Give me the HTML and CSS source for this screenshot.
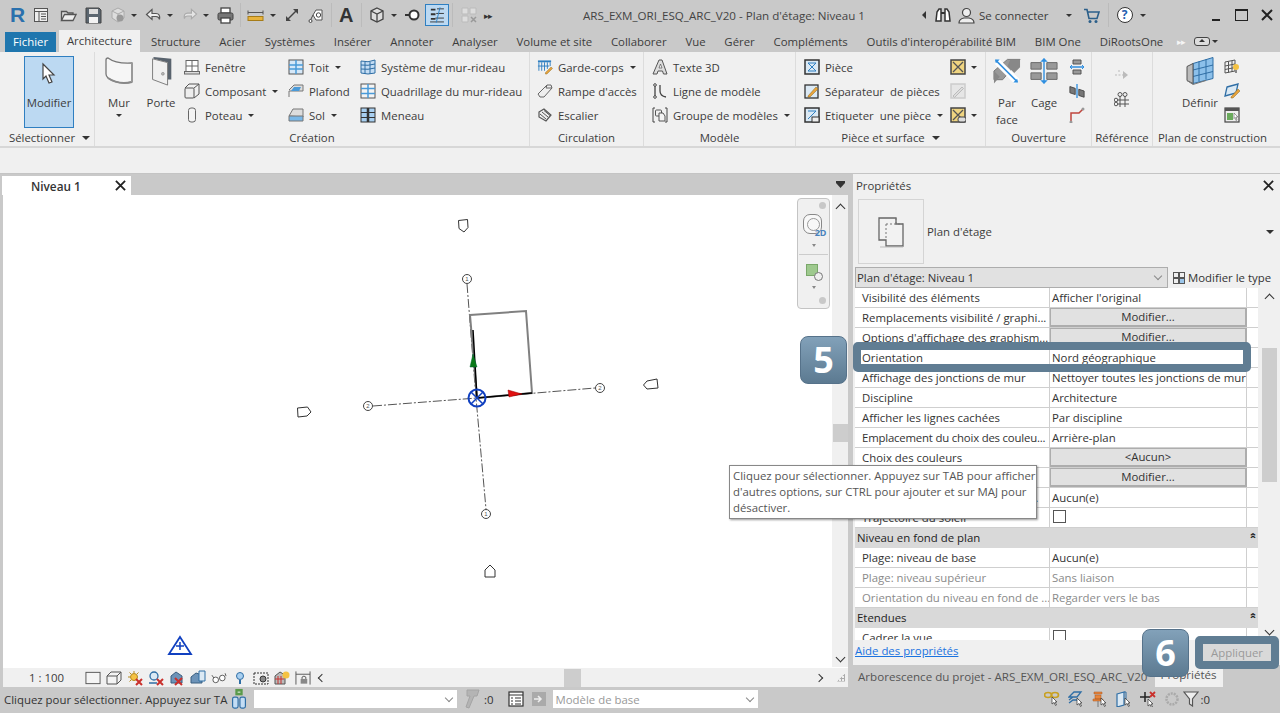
FILE: index.html
```html
<!DOCTYPE html>
<html lang="fr">
<head>
  <meta charset="UTF-8">
  <title>ARS_EXM_ORI_ESQ_ARC_V20 - Plan d'étage: Niveau 1</title>
  <link rel="stylesheet" href="styles.css">
</head>
<body>

<!-- jeu d'icones -->
<svg class="sprite" xmlns="http://www.w3.org/2000/svg">
  <symbol id="i-browser" viewBox="0 0 16 16"><rect x="1.5" y="1.5" width="13" height="13" fill="#eee" stroke="#555"/><path d="M1.5 4.5h13M6 4.5v10M8 7h5M8 9.500h5M8 12h5" stroke="#555" fill="none"/></symbol>
  <symbol id="i-open" viewBox="0 0 17 16"><path d="M1.500 13V4h5l1.500 1.500h5V7" fill="#ddd" stroke="#555" stroke-width="1.300"/><path d="M1.500 13l3-6h11.500l-3 6z" fill="#eee" stroke="#555" stroke-width="1.300"/></symbol>
  <symbol id="i-save" viewBox="0 0 17 17"><path d="M1 1h13l2 2v13H1z" fill="#5b6670" stroke="#444"/><rect x="4" y="2" width="9" height="5" fill="#ddd"/><rect x="4" y="10" width="9" height="6" fill="#f2f2f2"/></symbol>
  <symbol id="i-cube-grey" viewBox="0 0 16 16"><path d="M8 1l6 3v7l-6 4-6-4V4z" fill="#ddd" stroke="#aaa"/><path d="M2 4l6 3 6-3M8 7v8" stroke="#aaa" fill="none"/><circle cx="10" cy="11" r="3.500" fill="#999"/></symbol>
  <symbol id="i-undo" viewBox="0 0 17 16"><path d="M7 2L1.500 7 7 12V9h4q3 0 3.500 3 1-6-3.500-6H7z" fill="#eee" stroke="#555" stroke-width="1.200"/></symbol>
  <symbol id="i-redo" viewBox="0 0 17 16"><path d="M10 2l5.500 5L10 12V9H6q-3 0-3.500 3-1-6 3.500-6h4z" fill="#e4e4e4" stroke="#aaa" stroke-width="1.200"/></symbol>
  <symbol id="i-print" viewBox="0 0 17 17"><rect x="4" y="1" width="9" height="5" fill="#fff" stroke="#444" stroke-width="1.300"/><rect x="1" y="6" width="15" height="7" rx="1.500" fill="#777" stroke="#444"/><rect x="4" y="11" width="9" height="5" fill="#fff" stroke="#444" stroke-width="1.300"/></symbol>
  <symbol id="i-measure" viewBox="0 0 17 16"><path d="M1 5h15M1 3v4M16 3v4" stroke="#555" fill="none"/><rect x="1" y="9" width="15" height="4" fill="#e8b33c" stroke="#a67c18"/></symbol>
  <symbol id="i-dim" viewBox="0 0 16 16"><path d="M3 13L13 3" stroke="#444" stroke-width="1.500"/><path d="M9 2h5v5zM2 9v5h5z" fill="#444"/></symbol>
  <symbol id="i-tag" viewBox="0 0 16 16"><path d="M2 14l3-6" stroke="#444"/><circle cx="2.500" cy="14" r="1.500" fill="#fff" stroke="#444"/><path d="M5 8l3-5h6v10H8z" fill="#fff" stroke="#555"/><circle cx="10.500" cy="8" r="2.200" fill="none" stroke="#444"/></symbol>
  <symbol id="i-house" viewBox="0 0 16 16"><path d="M8 1l6 3v8l-6 3-6-3V4z" fill="#ddd" stroke="#444" stroke-width="1.300"/><path d="M2 4l6 3 6-3M8 7v8" stroke="#444" fill="none" stroke-width="1.300"/></symbol>
  <symbol id="i-thin" viewBox="0 0 16 16"><circle cx="9" cy="8" r="4.500" fill="#fff" stroke="#333" stroke-width="2"/><path d="M0 8h5" stroke="#333" stroke-width="2"/></symbol>
  <symbol id="i-toggle" viewBox="0 0 24 26"><path d="M4 6h6M4 12h6M4 18h6" stroke="#333" stroke-width="2.500"/><path d="M12 5h9M11 11h10M10 17h11M3 22h18" stroke="#333" stroke-width="1.200"/><path d="M16 3l-5 20" stroke="#2f7fc1" stroke-width="1.200"/></symbol>
  <symbol id="i-squares" viewBox="0 0 16 16"><path d="M1 1h6v6H1zM9 1h6v6H9zM1 9h6v6H1z" fill="#ddd" stroke="#bbb"/><path d="M10 10l5 5M15 10l-5 5" stroke="#999" stroke-width="1.500"/></symbol>
  <symbol id="i-binoc" viewBox="0 0 16 16"><path d="M1 14l1-9 2-3h2v12zM15 14l-1-9-2-3h-2v12z" fill="#fff" stroke="#333" stroke-width="1.500"/><path d="M6 6h4" stroke="#333" stroke-width="2"/></symbol>
  <symbol id="i-user" viewBox="0 0 17 17"><circle cx="8.500" cy="5.500" r="4" fill="#eee" stroke="#444" stroke-width="1.200"/><path d="M1 16q0-4 5-5h5q5 1 5 5z" fill="#eee" stroke="#444" stroke-width="1.200"/></symbol>
  <symbol id="i-cart" viewBox="0 0 17 16"><path d="M1 2h3l2 9h8l2-6.500H5" fill="none" stroke="#2b5f8a" stroke-width="1.600"/><circle cx="7" cy="14" r="1.500" fill="#2b5f8a"/><circle cx="13" cy="14" r="1.500" fill="#2b5f8a"/></symbol>
  <symbol id="i-close" viewBox="0 0 12 12"><path d="M1 1l10 10M11 1L1 11" stroke="#222" stroke-width="2"/></symbol>

  <symbol id="i-cursor" viewBox="0 0 16 24"><path d="M2 2l11 11H8l3 7-3 1-3-7-3 3z" fill="#fff" stroke="#444" stroke-width="1.200"/></symbol>
  <symbol id="i-mur" viewBox="0 0 28 30"><path d="M3 2Q11 8 27 7V26Q13 29 3 22 1 20 1 18V4Q1 2 3 2z" fill="#f6f6f6" stroke="#777" stroke-width="1.300"/><path d="M3 22Q13 29 27 26" fill="none" stroke="#888" stroke-width="2"/><path d="M27 7V26" stroke="#999" stroke-width="2"/></symbol>
  <symbol id="i-porte" viewBox="0 0 24 32"><path d="M4 1l19 2v22h-4V7L4 3z" fill="#59636e"/><path d="M3 3l16 4v24L3 25z" fill="#f0f0f0" stroke="#777"/><circle cx="14" cy="19" r="1.500" fill="#bbb" stroke="#666" stroke-width=".5"/></symbol>
  <symbol id="i-fenetre" viewBox="0 0 16 16"><rect x="2" y="1.500" width="12" height="11" fill="#fff" stroke="#666"/><path d="M8 1.500v11M2 7h12" stroke="#666"/><rect x=".5" y="12.500" width="15" height="2.500" fill="#ddd" stroke="#666"/></symbol>
  <symbol id="i-composant" viewBox="0 0 16 16"><rect x="1" y="5" width="9" height="10" rx="1" fill="#eee" stroke="#555"/><path d="M1 5l4-4h10v10l-5 4M10 5l5-4" fill="none" stroke="#555"/></symbol>
  <symbol id="i-poteau" viewBox="0 0 16 16"><rect x="4.500" y="1" width="7" height="14" rx="2.500" fill="#f4f4f4" stroke="#666"/></symbol>
  <symbol id="i-toit" viewBox="0 0 16 16"><rect x="1" y="1" width="14" height="14" fill="#d6e8f8" stroke="#555"/><path d="M8 1v14M1 6h14M1 10h14" stroke="#4a9ad8" stroke-width="1.500"/></symbol>
  <symbol id="i-plafond" viewBox="0 0 16 16"><path d="M1 7l5-5h9v6H1v6" fill="#ddd" stroke="#777"/><path d="M3 8l3-4h7l-2 4z" fill="#4a9ad8"/></symbol>
  <symbol id="i-sol" viewBox="0 0 16 16"><path d="M1 9l4-7h10v8z" fill="#ddd" stroke="#777"/><path d="M1 9h14v5H1z" fill="#7ab8e8" stroke="#777"/></symbol>
  <symbol id="i-sysmur" viewBox="0 0 16 16"><path d="M1 2q7 2 14-1v13q-7 2-14 0z" fill="#c4ddf4" stroke="#2f6ea5"/><path d="M5 3v12M10 3v12M1 6q7 1 14-1M1 10q7 1 14-1" stroke="#2f6ea5" fill="none"/></symbol>
  <symbol id="i-quad" viewBox="0 0 16 16"><rect x="1" y="1" width="14" height="14" fill="#f4f4f4" stroke="#555"/><path d="M1 5.500h14M1 10.500h14M8 1v14" stroke="#4a9ad8" stroke-width="1.500"/></symbol>
  <symbol id="i-meneau" viewBox="0 0 16 16"><rect x="1" y="1" width="14" height="14" fill="#a8cff0" stroke="#333"/><path d="M8 1v14" stroke="#333" stroke-width="2.500"/><path d="M1 5.500h14M1 10.500h14" stroke="#333"/></symbol>
  <symbol id="i-garde" viewBox="0 0 17 16"><path d="M1 2h14" stroke="#2f7fc1" stroke-width="2"/><path d="M2 3v9M5 3v9M8 3v9M11 3v7M14 3v4M1 7h12" stroke="#2f7fc1"/><path d="M9 14l6-6 1.500 1.500-6 6H9z" fill="#e8a33c" stroke="#8a6a20" stroke-width=".5"/></symbol>
  <symbol id="i-rampe" viewBox="0 0 16 16"><path d="M1 11L10 2h4l1 3-8 9H3z" fill="#eee" stroke="#666"/><path d="M10 2l-1 3 6 0" fill="none" stroke="#666"/></symbol>
  <symbol id="i-escalier" viewBox="0 0 16 16"><path d="M2 5l5-3 7 6-5 6-7-4z" fill="#eee" stroke="#555" stroke-width="1.200"/><path d="M3 7l6 5M5 5l6 5M7 3.500l6 5" stroke="#555" fill="none"/></symbol>
  <symbol id="i-texte3d" viewBox="0 0 16 16"><path d="M1 15L7 1h3l5 14h-3.500l-1-3H6l-1 3z" fill="#ddd" stroke="#555"/><path d="M7 9l1.500-4 1.500 4z" fill="#fff" stroke="#555" stroke-width=".7"/></symbol>
  <symbol id="i-ligne" viewBox="0 0 16 16"><path d="M3 2v12M8 2v6q0 5 6 6" fill="none" stroke="#444" stroke-width="1.300"/><circle cx="3" cy="2" r="1.300" fill="#fff" stroke="#444"/><circle cx="3" cy="14" r="1.300" fill="#fff" stroke="#444"/></symbol>
  <symbol id="i-groupe" viewBox="0 0 16 16"><path d="M3 1H1v14h2M13 1h2v14h-2" fill="none" stroke="#444"/><rect x="3.500" y="3" width="6" height="6" rx="1" fill="#eee" stroke="#555"/><path d="M7 6h4l2 3v5H7z" fill="#f4f4f4" stroke="#555"/></symbol>
  <symbol id="i-piece" viewBox="0 0 16 16"><rect x="1" y="1" width="14" height="14" fill="#dbe9f4" stroke="#333" stroke-width="1.500"/><path d="M4 4h8L4 12h8z" fill="none" stroke="#2f7fc1"/></symbol>
  <symbol id="i-separ" viewBox="0 0 16 16"><rect x="1" y="2" width="13" height="13" fill="#dbe9f4" stroke="#333" stroke-width="1.300"/><path d="M4 13l8-9 2 2-8 8H4z" fill="#e8a33c" stroke="#8a6a20" stroke-width=".5"/></symbol>
  <symbol id="i-etiq" viewBox="0 0 16 16"><rect x="1" y="1" width="14" height="14" fill="#dbe9f4" stroke="#333" stroke-width="1.500"/><path d="M4 4h8L4 12" fill="none" stroke="#2f7fc1"/><rect x="8" y="10" width="7" height="5" fill="#eee" stroke="#333"/></symbol>
  <symbol id="i-jaune" viewBox="0 0 16 16"><rect x="1" y="1" width="14" height="14" fill="#efd480" stroke="#444" stroke-width="1.500"/><path d="M3 3l10 10M13 3L3 13" stroke="#555" stroke-width="1.300"/></symbol>
  <symbol id="i-jaune-off" viewBox="0 0 16 16"><rect x="1" y="1" width="14" height="14" fill="#e6e6e6" stroke="#ccc" stroke-width="1.500"/><path d="M3 13l9-9 1.500 1.500-9 9z" fill="#ddd" stroke="#bbb"/></symbol>
  <symbol id="i-jaune-tag" viewBox="0 0 16 16"><rect x="1" y="1" width="14" height="14" fill="#efd480" stroke="#444" stroke-width="1.500"/><path d="M3 3l10 10M13 3L3 13" stroke="#555" stroke-width="1.300"/><rect x="8" y="10" width="8" height="5" rx="2" fill="#ddd" stroke="#444"/></symbol>
  <symbol id="i-parface" viewBox="0 0 29 30"><path d="M15 3h13L10 24H1V15z" fill="#999" stroke="#777"/><path d="M18 3l10 0v8l-6 6-7-7zM1 15l6 6-6 7z" fill="#888"/><path d="M4 5l21 21" stroke="#fff" stroke-width="7"/><path d="M3 4l22 22" stroke="#2f8fe0" stroke-width="1.500"/><path d="M2 3h5l-4 4zM26 27h-5l4-4z" fill="#2f8fe0"/></symbol>
  <symbol id="i-cage" viewBox="0 0 30 30"><path d="M1 6h11v7H1zM18 6h11v7H18zM1 17h11v7H1zM18 17h11v7H18z" fill="#999" stroke="#666"/><path d="M15 2v26" stroke="#2f8fe0" stroke-width="1.500"/><path d="M11 5l4-4 4 4zM11 25l4 4 4-4z" fill="#2f8fe0"/></symbol>
  <symbol id="i-ouv1" viewBox="0 0 16 16"><path d="M4 1h8v4H4zM4 11h8v4H4z" fill="#999" stroke="#555"/><path d="M1 8h14" stroke="#2f8fe0" stroke-width="1.500"/><path d="M3 6L1 8l2 2M13 6l2 2-2 2" fill="none" stroke="#2f8fe0"/></symbol>
  <symbol id="i-ouv2" viewBox="0 0 16 18"><path d="M0 4l6 2v7L0 11zM10 7l6 2v7l-6-2z" fill="#777" stroke="#444"/><path d="M8 1v16" stroke="#2f8fe0" stroke-width="1.500"/></symbol>
  <symbol id="i-ouv3" viewBox="0 0 16 16"><path d="M2 15V6h8l4-4" fill="none" stroke="#c0453c" stroke-width="1.500"/><circle cx="14" cy="2" r="1.500" fill="#999"/><circle cx="2" cy="15" r="1.500" fill="#999"/></symbol>
  <symbol id="i-refplan" viewBox="0 0 16 16"><path d="M1 8h9" stroke="#bbb" stroke-dasharray="2 1.500"/><path d="M9 4l5 4-5 4z" fill="#bbb"/><circle cx="5" cy="4" r="1" fill="#ccc"/></symbol>
  <symbol id="i-refgrid" viewBox="0 0 16 16"><path d="M6 4v11M11 4v11M1 8h14M1 12h14" stroke="#555" fill="none"/><circle cx="6" cy="2.500" r="2" fill="none" stroke="#555"/><circle cx="11" cy="2.500" r="2" fill="none" stroke="#555"/><circle cx="2" cy="8" r="1.800" fill="#f0f0f0" stroke="#555"/><circle cx="2" cy="12" r="1.800" fill="#f0f0f0" stroke="#555"/></symbol>
  <symbol id="i-definir" viewBox="0 0 28 29"><path d="M7 7L27 1v21L7 27z" fill="#8cc0ea" stroke="#2f6ea5"/><path d="M13 5v20M20 3v20M7 13.500l20-5M7 20l20-5" stroke="#2f6ea5" fill="none"/><path d="M7 7L1 10v14l6 3z" fill="#bbb" stroke="#555"/><path d="M1 24l6 4 13-4" fill="none" stroke="#777"/></symbol>
  <symbol id="i-defgrid" viewBox="0 0 16 16"><path d="M1 3l10-2v11L1 14z" fill="#f2f2f2" stroke="#555"/><path d="M4.500 2.500v11M8 2v11M1 7l10-2M1 10.500l10-2" stroke="#555"/><circle cx="12" cy="8" r="3" fill="#f5c242"/><path d="M11 11h2v3h-2z" fill="#888"/></symbol>
  <symbol id="i-defedit" viewBox="0 0 16 16"><path d="M3 4l11-3-2 9-11 3z" fill="#dbe9f4" stroke="#2f6ea5" stroke-width="1.300"/><path d="M7 14l7-8 2 2-7 7H7z" fill="#e8a33c" stroke="#8a6a20" stroke-width=".5"/></symbol>
  <symbol id="i-defview" viewBox="0 0 16 16"><rect x="1" y="1" width="14" height="14" fill="#eee" stroke="#444" stroke-width="1.200"/><rect x="1" y="1" width="14" height="3" fill="#555"/><path d="M3 6h6v7H3z" fill="#6aaa5c"/><path d="M10 6l4 4h-2l1 3-1 .5-1-3-1 1z" fill="#fff" stroke="#444" stroke-width=".5"/></symbol>

  <symbol id="i-plan" viewBox="0 0 32 32"><path d="M4 2h17v6h7v22H11v-6H4z" fill="#f2f2f2" stroke="#666" stroke-width="1.300"/><path d="M11 8h17M11 8v16M21 2v6" stroke="#777" stroke-dasharray="2 2" fill="none"/><path d="M5 31h23" stroke="#bbb"/></symbol>
  <symbol id="i-mtype" viewBox="0 0 12 12"><rect x=".5" y=".5" width="5" height="5" fill="#eee" stroke="#555"/><rect x="6.500" y=".5" width="5" height="5" fill="#eee" stroke="#555"/><rect x=".5" y="6.500" width="5" height="5" fill="#eee" stroke="#555"/><rect x="6.500" y="6.500" width="5" height="5" fill="#9cc6ea" stroke="#555"/></symbol>

  <symbol id="i-sq" viewBox="0 0 17 16"><rect x="1" y="2" width="15" height="12" fill="#f4f4f4" stroke="#555"/></symbol>
  <symbol id="i-box" viewBox="0 0 16 16"><path d="M1 6l4-4h10v8l-4 4H1z" fill="#f4f4f4" stroke="#555"/><path d="M1 6h10v8M11 6l4-4" fill="none" stroke="#555"/></symbol>
  <symbol id="i-sun" viewBox="0 0 16 16"><circle cx="7" cy="7" r="3.500" fill="#f5c242" stroke="#b58a20"/><path d="M7 1v2M1 7h2M2.500 2.500L4 4M11.500 2.500L10 4M2.500 11.500L4 10" stroke="#b58a20"/><path d="M9 9l6 6M15 9l-6 6" stroke="#c9302c" stroke-width="2"/></symbol>
  <symbol id="i-shadow" viewBox="0 0 16 16"><circle cx="6" cy="6" r="4" fill="#dbe9f4" stroke="#2f6ea5" stroke-width="1.300"/><path d="M1 13h8" stroke="#2f6ea5" stroke-width="1.500"/><path d="M9 9l6 6M15 9l-6 6" stroke="#c9302c" stroke-width="2"/></symbol>
  <symbol id="i-crop" viewBox="0 0 16 16"><path d="M2 6l5-4 6 4v7H2z" fill="#6d93b8" stroke="#3a5f80"/><path d="M6 8l7 7M13 8l-7 7" stroke="#c9302c" stroke-width="2"/></symbol>
  <symbol id="i-cropf" viewBox="0 0 16 16"><path d="M1 7l5-4 6 2v8H1z" fill="#6d93b8" stroke="#3a5f80"/><path d="M9 1h6v10H9z" fill="#dbe9f4" stroke="#2f6ea5"/></symbol>
  <symbol id="i-glass" viewBox="0 0 17 16"><circle cx="5" cy="10" r="3" fill="#fff" stroke="#555"/><circle cx="12" cy="8" r="3" fill="#fff" stroke="#555"/><path d="M1 5l2 3M15 3l1 3" stroke="#555"/></symbol>
  <symbol id="i-bulb" viewBox="0 0 16 16"><circle cx="8" cy="6" r="3.500" fill="#a8cff0" stroke="#2f6ea5"/><path d="M7 10h2v4H7z" fill="#2f6ea5"/></symbol>
  <symbol id="i-camera" viewBox="0 0 16 16"><rect x="1" y="3" width="14" height="11" fill="none" stroke="#333" stroke-dasharray="2 1"/><circle cx="10" cy="9" r="3" fill="#888" stroke="#333"/></symbol>
  <symbol id="i-hide" viewBox="0 0 16 16"><path d="M1 6l5-4 5 3v9H1z" fill="#bbb" stroke="#555"/><path d="M4 6v8M7 6v8M1 9h9" stroke="#c9302c"/><circle cx="12" cy="5" r="3.500" fill="#f5c242"/></symbol>
  <symbol id="i-lock" viewBox="0 0 17 16"><path d="M1 1v14M16 1v14M1 4h15" stroke="#555"/><rect x="6" y="9" width="7" height="5" fill="#888"/><path d="M7.500 9V7q2-2 4 0v2" fill="none" stroke="#555"/></symbol>

  <symbol id="i-work" viewBox="0 0 20 24"><rect x="3" y="10" width="6" height="12" rx="2" fill="#c4ddf4" stroke="#2f6ea5" stroke-width="1.300"/><rect x="11" y="10" width="6" height="12" rx="2" fill="#c4ddf4" stroke="#2f6ea5" stroke-width="1.300"/><rect x="6" y="1" width="8" height="7" fill="#5a9a4a"/><path d="M8.500 4.500h3" stroke="#fff"/></symbol>
  <symbol id="i-pin-grey" viewBox="0 0 18 20"><path d="M4 1h12l-2 6h-3l-5 12-3-1 4-11H4z" fill="#b4b4b4" stroke="#a4a4a4"/></symbol>
  <symbol id="i-list" viewBox="0 0 16 16"><rect x="1" y="1" width="14" height="14" fill="#fff" stroke="#333" stroke-width="1.200"/><path d="M1 4h14" stroke="#333"/><path d="M3 7h2M3 10h2M3 13h2M7 7h6M7 10h6M7 13h6" stroke="#333"/></symbol>
  <symbol id="i-exit" viewBox="0 0 16 16"><rect x="1" y="1" width="14" height="14" fill="#aaa"/><path d="M3 8h6M7 5l3 3-3 3" stroke="#eee" fill="none" stroke-width="1.500"/></symbol>
  <symbol id="i-s-link" viewBox="0 0 16 16"><ellipse cx="4" cy="4" rx="3.500" ry="2.500" fill="none" stroke="#c8a020" stroke-width="1.600"/><ellipse cx="11" cy="4" rx="3.500" ry="2.500" fill="none" stroke="#c8a020" stroke-width="1.600"/><path d="M8 6l5 5h-2l1.500 3-1 .5L10 11.500 8 13z" fill="#fff" stroke="#333" stroke-width=".7"/></symbol>
  <symbol id="i-s-layer" viewBox="0 0 16 16"><path d="M1 6l5-5h7L9 6zM1 9l4-3M1 12l4-3h6" fill="none" stroke="#2f6ea5" stroke-width="1.300"/><path d="M9 7l5 5h-2l1.500 3-1 .5L11 12.500 9 14z" fill="#fff" stroke="#333" stroke-width=".7"/></symbol>
  <symbol id="i-s-pin" viewBox="0 0 16 16"><path d="M2 1h8v2H2zM3 4h6v4H3zM1 8h10v2H1z" fill="#e8853c" stroke="#a8551c" stroke-width=".5"/><path d="M6 10v6" stroke="#777"/><path d="M9 7l5 5h-2l1.500 3-1 .5L11 12.500 9 14z" fill="#fff" stroke="#333" stroke-width=".7"/></symbol>
  <symbol id="i-s-door" viewBox="0 0 16 16"><path d="M1 3l7-2v13l-7 2z" fill="#dbe9f4" stroke="#2f6ea5" stroke-width="1.200"/><path d="M8 1h2v8" fill="none" stroke="#2f6ea5"/><path d="M9 7l5 5h-2l1.500 3-1 .5L11 12.500 9 14z" fill="#fff" stroke="#333" stroke-width=".7"/></symbol>
  <symbol id="i-s-move" viewBox="0 0 16 16"><path d="M5 1v10M0 6h10" stroke="#222" stroke-width="1.500"/><path d="M10 1l5 5M15 1l-5 5" stroke="#c9302c" stroke-width="1.800"/><path d="M8 8l5 5h-2l1.500 3-1 .5L10 13.500 8 15z" fill="#fff" stroke="#333" stroke-width=".7"/></symbol>
  <symbol id="i-s-ring" viewBox="0 0 16 16"><circle cx="8" cy="8" r="5.500" fill="none" stroke="#aaa" stroke-width="2.500" stroke-dasharray="2 1"/></symbol>
  <symbol id="i-funnel" viewBox="0 0 16 16"><path d="M1 1h14l-5.500 7v7l-3-2V8z" fill="#eee" stroke="#555" stroke-width="1.200"/></symbol>
</svg>

<div class="page">

  <header class="titlebar">
    <div class="qat">
      <span class="logo-r">R</span>
      <svg class="ico"><use href="#i-browser"/></svg>
      <svg class="ico-17"><use href="#i-open"/></svg>
      <svg class="ico-17"><use href="#i-save"/></svg>
      <svg class="ico"><use href="#i-cube-grey"/></svg>
      <span class="dd"></span>
      <svg class="ico-17"><use href="#i-undo"/></svg>
      <span class="dd"></span>
      <svg class="ico"><use href="#i-redo"/></svg>
      <span class="dd"></span>
      <svg class="ico-17"><use href="#i-print"/></svg>
      <span class="qat-sep"></span>
      <svg class="ico-17"><use href="#i-measure"/></svg>
      <span class="dd"></span>
      <svg class="ico"><use href="#i-dim"/></svg>
      <svg class="ico"><use href="#i-tag"/></svg>
      <span class="qat-sep"></span>
      <span class="qat-a">A</span>
      <span class="qat-sep"></span>
      <svg class="ico"><use href="#i-house"/></svg>
      <span class="dd"></span>
      <svg class="ico"><use href="#i-thin"/></svg>
      <span class="qat-on"><svg class="ico-toggle"><use href="#i-toggle"/></svg></span>
      <span class="qat-sep"></span>
      <svg class="ico"><use href="#i-squares"/></svg>
      <span class="chev">▸▸</span>
    </div>
    <div class="doc-title">ARS_EXM_ORI_ESQ_ARC_V20 - Plan d'étage: Niveau 1</div>
    <div class="title-right">
      <span class="back-arrow"></span>
      <svg class="ico"><use href="#i-binoc"/></svg>
      <svg class="ico-17"><use href="#i-user"/></svg>
      <span class="login">Se connecter</span>
      <span class="dd"></span>
      <svg class="ico-17"><use href="#i-cart"/></svg>
      <span class="qat-sep"></span>
      <span class="help">?</span>
      <span class="dd"></span>
      <div class="win-btns">
        <span class="win-min"></span>
        <span class="win-max"></span>
        <svg class="win-x"><use href="#i-close"/></svg>
      </div>
    </div>
  </header>

  <nav class="tabs">
    <span class="tab-file">Fichier</span>
    <span class="tab-on">Architecture</span>
    <span>Structure</span>
    <span>Acier</span>
    <span>Systèmes</span>
    <span>Insérer</span>
    <span>Annoter</span>
    <span>Analyser</span>
    <span>Volume et site</span>
    <span>Collaborer</span>
    <span>Vue</span>
    <span>Gérer</span>
    <span>Compléments</span>
    <span>Outils d'interopérabilité BIM</span>
    <span>BIM One</span>
    <span>DiRootsOne</span>
    <span class="tab-more">▸▸</span>
    <span class="tab-toggle"></span>
    <span class="dd"></span>
  </nav>

  <section class="ribbon">
    <div class="panel p-select">
      <div class="panel-body">
        <div class="modify-btn">
          <svg class="ico-cursor"><use href="#i-cursor"/></svg>
          <span>Modifier</span>
        </div>
      </div>
      <div class="panel-label">Sélectionner <span class="dd-label"></span></div>
    </div>

    <div class="panel p-create">
      <div class="panel-body">
        <div class="big-tool w-mur"><svg class="ico-big"><use href="#i-mur"/></svg><span>Mur</span><span class="dd"></span></div>
        <div class="big-tool w-porte"><svg class="ico-porte"><use href="#i-porte"/></svg><span>Porte</span></div>
        <div class="tool-col w-c1">
          <div class="tool"><svg class="ico"><use href="#i-fenetre"/></svg>Fenêtre</div>
          <div class="tool"><svg class="ico"><use href="#i-composant"/></svg>Composant <span class="dd dd-gap"></span></div>
          <div class="tool"><svg class="ico"><use href="#i-poteau"/></svg>Poteau <span class="dd dd-gap"></span></div>
        </div>
        <div class="tool-col w-c2">
          <div class="tool"><svg class="ico"><use href="#i-toit"/></svg>Toit <span class="dd dd-gap"></span></div>
          <div class="tool"><svg class="ico"><use href="#i-plafond"/></svg>Plafond</div>
          <div class="tool"><svg class="ico"><use href="#i-sol"/></svg>Sol <span class="dd dd-gap"></span></div>
        </div>
        <div class="tool-col">
          <div class="tool"><svg class="ico"><use href="#i-sysmur"/></svg>Système de mur-rideau</div>
          <div class="tool"><svg class="ico"><use href="#i-quad"/></svg>Quadrillage du mur-rideau</div>
          <div class="tool"><svg class="ico"><use href="#i-meneau"/></svg>Meneau</div>
        </div>
      </div>
      <div class="panel-label">Création</div>
    </div>

    <div class="panel p-circ">
      <div class="panel-body">
        <div class="tool-col">
          <div class="tool"><svg class="ico"><use href="#i-garde"/></svg>Garde-corps <span class="dd dd-gap"></span></div>
          <div class="tool"><svg class="ico"><use href="#i-rampe"/></svg>Rampe d'accès</div>
          <div class="tool"><svg class="ico"><use href="#i-escalier"/></svg>Escalier</div>
        </div>
      </div>
      <div class="panel-label">Circulation</div>
    </div>

    <div class="panel p-model">
      <div class="panel-body">
        <div class="tool-col">
          <div class="tool"><svg class="ico"><use href="#i-texte3d"/></svg>Texte 3D</div>
          <div class="tool"><svg class="ico"><use href="#i-ligne"/></svg>Ligne de modèle</div>
          <div class="tool"><svg class="ico"><use href="#i-groupe"/></svg>Groupe de modèles <span class="dd dd-gap"></span></div>
        </div>
      </div>
      <div class="panel-label">Modèle</div>
    </div>

    <div class="panel p-room">
      <div class="panel-body">
        <div class="tool-col w-room">
          <div class="tool"><svg class="ico"><use href="#i-piece"/></svg>Pièce</div>
          <div class="tool"><svg class="ico"><use href="#i-separ"/></svg>Séparateur&nbsp; de pièces</div>
          <div class="tool"><svg class="ico"><use href="#i-etiq"/></svg>Etiqueter&nbsp; une pièce <span class="dd dd-gap"></span></div>
        </div>
        <div class="tool-col">
          <div class="tool"><svg class="ico"><use href="#i-jaune"/></svg><span class="dd"></span></div>
          <div class="tool"><svg class="ico"><use href="#i-jaune-off"/></svg></div>
          <div class="tool"><svg class="ico"><use href="#i-jaune-tag"/></svg><span class="dd"></span></div>
        </div>
      </div>
      <div class="panel-label">Pièce et surface <span class="dd-label"></span></div>
    </div>

    <div class="panel p-open">
      <div class="panel-body">
        <div class="big-tool w-parface"><svg class="ico-big"><use href="#i-parface"/></svg><span>Par<br>face</span></div>
        <div class="big-tool w-cage"><svg class="ico-big"><use href="#i-cage"/></svg><span>Cage</span></div>
        <div class="tool-col">
          <div class="tool"><svg class="ico"><use href="#i-ouv1"/></svg></div>
          <div class="tool"><svg class="ico"><use href="#i-ouv2"/></svg></div>
          <div class="tool"><svg class="ico"><use href="#i-ouv3"/></svg></div>
        </div>
      </div>
      <div class="panel-label">Ouverture</div>
    </div>

    <div class="panel p-ref">
      <div class="panel-body ref-body">
        <svg class="ico"><use href="#i-refplan"/></svg>
        <svg class="ico"><use href="#i-refgrid"/></svg>
      </div>
      <div class="panel-label">Référence</div>
    </div>

    <div class="panel p-plan">
      <div class="panel-body">
        <div class="big-tool w-definir"><svg class="ico-big"><use href="#i-definir"/></svg><span>Définir</span></div>
        <div class="tool-col">
          <div class="tool"><svg class="ico"><use href="#i-defgrid"/></svg></div>
          <div class="tool"><svg class="ico"><use href="#i-defedit"/></svg></div>
          <div class="tool"><svg class="ico"><use href="#i-defview"/></svg></div>
        </div>
      </div>
      <div class="panel-label">Plan de construction</div>
    </div>
  </section>

  <div class="optionsbar"></div>

  <main class="workspace">

    <section class="viewcol">
      <div class="viewtabs">
        <div class="viewtab"><span>Niveau 1</span><svg class="tab-x"><use href="#i-close"/></svg></div>
        <span class="viewtabs-menu"></span>
      </div>
      <div class="viewmain">
        <div class="canvas">
          <svg class="drawing" viewBox="3 195 829 472">
            <g fill="none" stroke="#555" stroke-dasharray="9 2 2 2">
              <path d="M467 284L476 398 486 509"/>
              <path d="M373 406L477 398 595 388"/>
            </g>
            <g fill="#fff" stroke="#444">
              <circle cx="467" cy="279" r="4.500"/>
              <circle cx="486" cy="514" r="4.500"/>
              <circle cx="368" cy="406" r="4.500"/>
              <circle cx="600" cy="388" r="4.500"/>
            </g>
            <g class="bubble-num">
              <text x="467" y="281">1</text>
              <text x="486" y="516">1</text>
              <text x="368" y="408">2</text>
              <text x="600" y="390">2</text>
            </g>
            <path d="M470 315L526 311 532 393 477 398z" fill="#fff" stroke="#808080" stroke-width="2"/>
            <path d="M477 398L473 330M477 398L532 393" stroke="#000" stroke-width="1.500"/>
            <path d="M473 354l-3 13h7z" fill="#0b7a18" stroke="#063" stroke-width=".5"/>
            <path d="M522 394l-14-4 1 7z" fill="#e01010" stroke="#900" stroke-width=".5"/>
            <circle cx="477" cy="398" r="8.500" fill="none" stroke="#1040c0" stroke-width="2"/>
            <path d="M471 392l12 12M483 392l-12 12" stroke="#1040c0" stroke-width="1.500"/>
            <g fill="#fff" stroke="#333">
              <path d="M458.500 220.500l9-1 .5 8-4 4.500-5-3.500z"/>
              <path d="M647 381l10-2 1 9-11 1-3.500-4z"/>
              <path d="M297.500 408l10-1 3.500 5-4 4-9 1z"/>
              <path d="M485 570l5-5 5 5v7h-10z"/>
            </g>
            <path d="M180 637l11 17h-22z" fill="none" stroke="#1040c0" stroke-width="1.800"/>
            <path d="M180 642v8M176 646h8" stroke="#1040c0" stroke-width="1.500"/>
          </svg>
          <div class="navbar">
            <span class="nav-close"></span>
            <div class="nav-wheel"><span class="nav-2d">2D</span></div>
            <span class="nav-dd"></span>
            <span class="nav-sep"></span>
            <div class="nav-zoom"></div>
            <span class="nav-dd"></span>
            <span class="nav-close"></span>
          </div>
        </div>
        <div class="vscroll">
          <span class="arrow-up"></span>
          <span class="vthumb"></span>
          <span class="arrow-down"></span>
        </div>
      </div>
      <div class="viewbar">
        <span class="scale">1 : 100</span>
        <div class="viewbar-icons">
          <svg class="ico"><use href="#i-sq"/></svg>
          <svg class="ico"><use href="#i-box"/></svg>
          <svg class="ico"><use href="#i-sun"/></svg>
          <svg class="ico"><use href="#i-shadow"/></svg>
          <svg class="ico"><use href="#i-crop"/></svg>
          <svg class="ico"><use href="#i-cropf"/></svg>
          <svg class="ico"><use href="#i-glass"/></svg>
          <svg class="ico"><use href="#i-bulb"/></svg>
          <svg class="ico"><use href="#i-camera"/></svg>
          <svg class="ico"><use href="#i-hide"/></svg>
          <svg class="ico"><use href="#i-lock"/></svg>
          <span class="arrow-left"></span>
        </div>
        <span class="hthumb"></span>
        <span class="arrow-right"></span>
        <span class="grip"></span>
      </div>
    </section>

    <aside class="props">
      <div class="props-head"><span>Propriétés</span><svg class="tab-x"><use href="#i-close"/></svg></div>
      <div class="type-row">
        <div class="type-thumb"><svg class="ico-plan"><use href="#i-plan"/></svg></div>
        <span class="type-name">Plan d'étage</span>
        <span class="dd"></span>
      </div>
      <div class="select-row">
        <div class="select-box"><span>Plan d'étage: Niveau 1</span><span class="select-chev"></span></div>
        <svg class="ico-mtype"><use href="#i-mtype"/></svg>
        <span>Modifier le type</span>
      </div>
      <div class="table-wrap">
        <div class="prop-table">
          <div class="prop-row"><div>Visibilité des éléments</div><div>Afficher l'original</div></div>
          <div class="prop-row"><div>Remplacements visibilité / graphi...</div><div class="cell-btn">Modifier...</div></div>
          <div class="prop-row"><div>Options d'affichage des graphism...</div><div class="cell-btn">Modifier...</div></div>
          <div class="prop-row"><div>Orientation</div><div>Nord géographique</div></div>
          <div class="prop-row"><div>Affichage des jonctions de mur</div><div>Nettoyer toutes les jonctions de mur</div></div>
          <div class="prop-row"><div>Discipline</div><div>Architecture</div></div>
          <div class="prop-row"><div>Afficher les lignes cachées</div><div>Par discipline</div></div>
          <div class="prop-row"><div class="tight">Emplacement du choix des couleu...</div><div>Arrière-plan</div></div>
          <div class="prop-row"><div>Choix des couleurs</div><div class="cell-btn">&lt;Aucun&gt;</div></div>
          <div class="prop-row"><div>Couleurs du système</div><div class="cell-btn">Modifier...</div></div>
          <div class="prop-row"><div>Paramètres d'affichage analytiq...</div><div>Aucun(e)</div></div>
          <div class="prop-row"><div>Trajectoire du soleil</div><div><span class="check"></span></div></div>
          <div class="prop-group">Niveau en fond de plan<span class="collapse">«</span></div>
          <div class="prop-row"><div>Plage: niveau de base</div><div>Aucun(e)</div></div>
          <div class="prop-row muted"><div>Plage: niveau supérieur</div><div>Sans liaison</div></div>
          <div class="prop-row muted"><div>Orientation du niveau en fond de ...</div><div>Regarder vers le bas</div></div>
          <div class="prop-group">Etendues<span class="collapse">«</span></div>
          <div class="prop-row"><div>Cadrer la vue</div><div><span class="check"></span></div></div>
        </div>
        <div class="props-scroll">
          <span class="arrow-up"></span>
          <span class="pthumb"></span>
          <span class="arrow-down"></span>
        </div>
      </div>
      <div class="props-foot">
        <a class="help-link" href="#">Aide des propriétés</a>
        <span class="apply">Appliquer</span>
      </div>
      <div class="props-tabs">
        <span>Arborescence du projet - ARS_EXM_ORI_ESQ_ARC_V20</span>
        <span class="ptab-on">Propriétés</span>
      </div>
    </aside>
  </main>

  <footer class="status">
    <span class="status-text">Cliquez pour sélectionner. Appuyez sur TA</span>
    <svg class="ico-work"><use href="#i-work"/></svg>
    <div class="status-input w-work"><span class="select-chev"></span></div>
    <svg class="ico-pin"><use href="#i-pin-grey"/></svg>
    <span class="zero">:0</span>
    <svg class="ico s-list"><use href="#i-list"/></svg>
    <svg class="ico"><use href="#i-exit"/></svg>
    <div class="status-input w-model"><span class="model-name">Modèle de base</span><span class="select-chev"></span></div>
    <div class="status-right">
      <svg class="ico"><use href="#i-s-link"/></svg>
      <svg class="ico"><use href="#i-s-layer"/></svg>
      <svg class="ico"><use href="#i-s-pin"/></svg>
      <svg class="ico"><use href="#i-s-door"/></svg>
      <svg class="ico"><use href="#i-s-move"/></svg>
      <svg class="ico"><use href="#i-s-ring"/></svg>
      <svg class="ico s-funnel"><use href="#i-funnel"/></svg>
      <span class="zero">:0</span>
    </div>
  </footer>

  <!-- tooltip et reperes par dessus -->
  <div class="tooltip">Cliquez pour sélectionner. Appuyez sur TAB pour afficher<br>d'autres options, sur CTRL pour ajouter et sur MAJ pour<br>désactiver.</div>
  <div class="badge badge-5">5</div>
  <div class="badge badge-6">6</div>
  <div class="mark mark-orient"></div>
  <div class="mark mark-apply"></div>
</div>

</body>
</html>
```

FILE: styles.css
```css
* {
    box-sizing: border-box;
}

html, body {
    margin: 0;
    padding: 0;
    height: 100%;
    overflow: hidden;
}

body {
    font-family: "Open Sans", "Noto Sans", sans-serif;
    font-size: 11.4px;
    color: #3c3c3c;
    background: #c9c9c9;
}

.sprite {
    position: absolute;
    width: 0;
    height: 0;
}

.page {
    position: relative;
    width: 1280px;
    height: 713px;
    display: flex;
    flex-direction: column;
    background: #c9c9c9;
    overflow: hidden;
}

/* tailles d'icones */
.ico { width: 16px; height: 16px; flex: none; }
.ico-17 { width: 17px; height: 17px; flex: none; }
.ico-big { width: 28px; height: 30px; flex: none; }
.ico-porte { width: 24px; height: 30px; flex: none; }
.ico-cursor { width: 16px; height: 24px; }
.ico-toggle { width: 24px; height: 26px; }
.ico-plan { width: 32px; height: 32px; }
.ico-mtype { width: 12px; height: 12px; flex: none; }
.ico-work { width: 20px; height: 22px; flex: none; }
.ico-pin { width: 18px; height: 20px; flex: none; }

.dd {
    display: inline-block;
    width: 0;
    height: 0;
    border-left: 3px solid transparent;
    border-right: 3px solid transparent;
    border-top: 3px solid #333;
    flex: none;
}

.dd-gap { margin-left: 1px; }

/* barre de titre */
.titlebar {
    height: 30px;
    display: flex;
    align-items: center;
    flex: none;
}

.qat {
    width: 500px;
    padding-left: 10px;
    display: grid;
    grid-template-columns: 23px 27px 25px 25px 21px 14px 22px 15px 21px 14px 23px 7px 23px 14px 24px 23px 8px 22px 8px 22px 14px 20px 27px 9px 23px 20px;
    align-items: center;
}

.logo-r {
    font-family: "Liberation Sans", sans-serif;
    font-weight: 700;
    font-size: 21px;
    line-height: 24px;
    color: #2a70ad;
}

.qat-sep {
    width: 1px;
    height: 24px;
    background: #bbb;
}

.qat-a {
    font-family: "Liberation Sans", sans-serif;
    font-weight: 700;
    font-size: 20px;
    line-height: 24px;
    color: #333;
}

.qat-on {
    width: 24px;
    height: 22px;
    display: flex;
    align-items: center;
    justify-content: center;
    background: #bcd9f2;
    border: 1px solid #2f7fc1;
}

.qat-on svg { width: 20px; height: 20px; }

.chev {
    font-size: 9px;
    letter-spacing: -1px;
    color: #333;
}

.doc-title {
    width: 422px;
    padding-left: 83px;
    white-space: nowrap;
    font-size: 11.6px;
    color: #444;
}

.title-right {
    flex: 1;
    display: flex;
    align-items: center;
}

.back-arrow {
    width: 0;
    height: 0;
    margin-right: 9px;
    border-top: 4px solid transparent;
    border-bottom: 4px solid transparent;
    border-right: 4px solid #333;
}

.title-right .ico { margin-right: 7px; }
.login { margin: 0 17px 0 4px; font-size: 11.5px; white-space: nowrap; }
.title-right .ico-17:nth-of-type(3) { margin-left: 11px; }
.title-right .qat-sep { margin: 0 8px 0 8px; }

.help {
    width: 16px;
    height: 16px;
    margin-right: 7px;
    border: 1.500px solid #333;
    border-radius: 50%;
    background: #fff;
    color: #2560b0;
    font-weight: 700;
    font-size: 12px;
    line-height: 13px;
    text-align: center;
}

.win-btns {
    display: flex;
    align-items: center;
    margin-left: 66px;
}

.win-min {
    width: 8px;
    height: 2px;
    margin-top: 10px;
    background: #222;
}

.win-max {
    width: 13px;
    height: 12px;
    margin-left: 15px;
    border: 1.500px solid #222;
    border-top-width: 2.500px;
}

.win-x {
    width: 12px;
    height: 12px;
    margin-left: 13px;
}

/* onglets du ruban */
.tabs {
    height: 22px;
    flex: none;
    display: flex;
    align-items: center;
    gap: 18.8px;
    padding-left: 5px;
    font-size: 11.4px;
    white-space: nowrap;
}

.tabs > span { flex: none; }

.tab-file {
    width: 51px;
    height: 20px;
    margin-top: 2px;
    margin-right: -15.800px;
    background: #1f76ae;
    color: #fff;
    text-align: center;
    line-height: 19px;
}

.tab-on {
    height: 22px;
    width: 81px;
    margin-right: -7.800px;
    background: #f0f0f0;
    text-align: center;
    line-height: 21px;
}

.tab-more {
    color: #f5f5f5;
    font-size: 9px;
    letter-spacing: -1px;
    margin-left: -4.800px;
    margin-right: -9.800px;
}

.tab-toggle {
    position: relative;
    width: 16px;
    height: 9px;
    border: 1px solid #444;
    border-radius: 3px;
    background: #ddd;
    margin-right: -17px;
}

.tab-toggle::after {
    content: "";
    position: absolute;
    left: 4px;
    top: 1px;
    border-left: 3px solid transparent;
    border-right: 3px solid transparent;
    border-bottom: 3px solid #333;
}

/* ruban */
.ribbon {
    height: 96px;
    flex: none;
    display: flex;
    padding-left: 5px;
    background: #f0f0f0;
    border-bottom: 2px solid #d7d7d7;
}

.panel {
    display: flex;
    flex-direction: column;
    flex: none;
    border-right: 1px solid #dcdcdc;
}

.p-select { width: 90px; }
.p-create { width: 435px; }
.p-circ { width: 114px; }
.p-model { width: 152px; }
.p-room { width: 190px; }
.p-open { width: 106px; }
.p-ref { width: 61px; }
.p-plan { width: 119px; border-right: 0; }

.panel-body {
    height: 78px;
    padding-top: 3px;
    display: flex;
}

.panel-label {
    text-align: center;
    line-height: 17px;
    padding-top: 1px;
    white-space: nowrap;
}

.dd-label {
    display: inline-block;
    width: 0;
    height: 0;
    margin: 0 0 2px 4px;
    border-left: 4px solid transparent;
    border-right: 4px solid transparent;
    border-top: 4px solid #333;
}

.modify-btn {
    width: 50px;
    height: 72px;
    margin: 1px 0 0 19px;
    display: flex;
    flex-direction: column;
    align-items: center;
    gap: 9px;
    padding-top: 5px;
    background: #bcd9f2;
    border: 1px solid #2f7fc1;
}

.big-tool {
    display: flex;
    flex-direction: column;
    align-items: center;
    text-align: center;
    line-height: 17px;
    padding-top: 1px;
}

.big-tool > svg { margin-bottom: 8px; }
.big-tool .dd { margin-top: 3px; }

.w-mur { width: 28px; margin: 0 13px 0 10px; }
.w-porte { width: 30px; margin-right: 8px; }
.w-c1 { width: 104px; }
.w-c2 { width: 72px; }
.w-parface { width: 30px; margin: 0 7px 0 6px; }
.w-cage { width: 30px; margin-right: 10px; }
.w-definir { width: 36px; margin: 0 6px 0 29px; }
.w-room { width: 146px; margin-left: 8px; }

.tool-col {
    display: flex;
    flex-direction: column;
    white-space: nowrap;
}

.tool {
    height: 24px;
    display: flex;
    align-items: center;
    gap: 5px;
}

.p-circ .tool-col { margin-left: 7px; }
.p-model .tool-col { margin-left: 8px; }

.ref-body {
    flex-direction: column;
    align-items: center;
    padding-top: 15px;
    gap: 9px;
}

.optionsbar {
    height: 26px;
    flex: none;
    background: #f0f0f0;
    border-bottom: 1px solid #c4c4c4;
}

/* zone de travail */
.workspace {
    height: 513px;
    flex: none;
    display: flex;
    justify-content: space-between;
}

.viewcol {
    width: 848px;
    display: flex;
    flex-direction: column;
    padding-left: 3px;
}

.viewtabs {
    height: 21px;
    flex: none;
    display: flex;
    align-items: flex-end;
    justify-content: space-between;
    margin-left: -1px;
}

.viewtab {
    width: 129px;
    height: 19px;
    padding: 0 5px 0 29px;
    display: flex;
    align-items: center;
    justify-content: space-between;
    background: #fff;
    font-weight: 600;
    font-size: 11.8px;
    color: #333;
}

.tab-x { width: 11px; height: 11px; }

.viewtabs-menu {
    width: 9px;
    height: 7px;
    margin: 0 3px 7px 0;
    border-top: 2px solid #333;
    clip-path: polygon(0 0, 100% 0, 100% 30%, 50% 100%, 0 30%);
    background-color: #333;
}

.viewmain {
    flex: 1;
    min-height: 0;
    display: flex;
}

.canvas {
    position: relative;
    width: 829px;
    background: #fff;
}

.drawing {
    display: block;
    width: 829px;
    height: 472px;
}

.bubble-num text {
    font-family: "Liberation Sans", sans-serif;
    font-size: 6px;
    text-anchor: middle;
    fill: #555;
}

.navbar {
    position: absolute;
    top: 3px;
    right: 2px;
    width: 33px;
    height: 111px;
    display: flex;
    flex-direction: column;
    align-items: center;
    background: #f0f0f0;
    border: 1px solid #c4c4c4;
    border-radius: 4px;
}

.nav-close {
    align-self: flex-end;
    width: 7px;
    height: 7px;
    margin: 3px 3px 3px 0;
    border-radius: 50%;
    background: #c8c8c8;
}

.nav-wheel {
    position: relative;
    width: 19px;
    height: 20px;
    margin: 2px 3px 0 0;
    border: 1px solid #888;
    border-radius: 7px;
    background: #f8f8f8;
}

.nav-wheel::before {
    content: "";
    position: absolute;
    left: 3px;
    top: 3px;
    width: 11px;
    height: 11px;
    border: 1px solid #999;
    border-radius: 50%;
}

.nav-2d {
    position: absolute;
    right: -6px;
    bottom: -6px;
    font-size: 9px;
    font-weight: 700;
    color: #4a83bd;
}

.nav-dd {
    width: 0;
    height: 0;
    margin-top: 10px;
    border-left: 2.500px solid transparent;
    border-right: 2.500px solid transparent;
    border-top: 3px solid #888;
}

.nav-sep {
    width: 29px;
    height: 1px;
    margin-top: 7px;
    background: #ccc;
}

.nav-zoom {
    position: relative;
    width: 12px;
    height: 12px;
    margin: 9px 4px 0 0;
    background: #9ec98e;
    border: 1px solid #7aa86a;
}

.nav-zoom::after {
    content: "";
    position: absolute;
    left: 7px;
    top: 7px;
    width: 7px;
    height: 7px;
    border: 1px solid #777;
    border-radius: 50%;
    background: #f0f0f0;
}

.navbar .nav-close:last-child { margin-top: 8px; }

.vscroll, .props-scroll {
    display: flex;
    flex-direction: column;
    align-items: center;
    background: #f0f0f0;
}

.vscroll {
    width: 16px;
    padding-top: 10px;
}

.arrow-up, .arrow-down {
    width: 7px;
    height: 7px;
    flex: none;
    border-left: 1.500px solid #333;
    border-top: 1.500px solid #333;
    transform: rotate(45deg);
}

.arrow-down {
    margin-top: auto;
    margin-bottom: 6px;
    transform: rotate(225deg);
}

.vthumb {
    width: 15px;
    height: 18px;
    margin-top: 212px;
    background: #cdcdcd;
}

.viewbar {
    height: 20px;
    flex: none;
    display: flex;
    align-items: center;
    background: #f0f0f0;
    border-top: 1px solid #fff;
}

.scale {
    width: 82px;
    padding-left: 26px;
    white-space: nowrap;
}

.viewbar-icons {
    display: flex;
    align-items: center;
    gap: 5px;
}

.arrow-left, .arrow-right {
    width: 6px;
    height: 6px;
    margin-left: 3px;
    border-left: 1.500px solid #333;
    border-bottom: 1.500px solid #333;
    transform: rotate(45deg);
}

.arrow-right {
    margin-left: 235px;
    transform: rotate(225deg);
}

.hthumb {
    width: 17px;
    height: 18px;
    margin-left: 239px;
    background: #cdcdcd;
}

.grip {
    width: 8px;
    height: 8px;
    margin-left: 15px;
    background: radial-gradient(#aaa 1px, transparent 1.200px) 0 0 / 3px 3px;
    clip-path: polygon(100% 0, 100% 100%, 0 100%);
}

/* proprietes */
.props {
    width: 427px;
    display: flex;
    flex-direction: column;
    background: #f0f0f0;
}

.props-head {
    height: 25px;
    flex: none;
    padding: 0 6px 2px 3px;
    display: flex;
    align-items: center;
    justify-content: space-between;
}

.type-row {
    height: 68px;
    flex: none;
    display: flex;
    align-items: center;
    padding: 0 0 3px 5px;
}

.type-thumb {
    width: 66px;
    height: 65px;
    display: flex;
    align-items: center;
    justify-content: center;
    border: 1px solid #d4d4d4;
}

.type-name {
    flex: 1;
    padding-left: 3px;
}

.type-row .dd {
    margin-right: 6px;
    border-left-width: 4px;
    border-right-width: 4px;
    border-top-width: 4px;
}

.select-row {
    height: 21px;
    flex: none;
    display: flex;
    align-items: center;
    padding-left: 2px;
    gap: 3px;
    color: #333;
}

.select-box {
    width: 313px;
    height: 21px;
    margin-right: 2px;
    padding: 0 6px 0 1px;
    display: flex;
    align-items: center;
    justify-content: space-between;
    background: #e1e1e1;
    border: 1px solid #adadad;
}

.select-chev {
    width: 6px;
    height: 6px;
    margin-top: -3px;
    border-right: 1px solid #888;
    border-bottom: 1px solid #888;
    transform: rotate(45deg);
}

.table-wrap {
    height: 352px;
    flex: none;
    display: flex;
    overflow: hidden;
    padding-left: 2px;
}

.prop-table {
    width: 403px;
    flex: none;
    background: #fff;
    color: #333;
}

.prop-row {
    height: 20px;
    display: grid;
    grid-template-columns: 195px 197px 11px;
    line-height: 19px;
    border-bottom: 1px solid #cfcfcf;
    white-space: nowrap;
}

.prop-row > div {
    overflow: hidden;
    padding-left: 2px;
    border-right: 1px solid #cfcfcf;
}

.prop-row > div:first-child { padding-left: 7px; }
.prop-row > .tight { letter-spacing: -.2px; }

.prop-row .cell-btn {
    text-align: center;
    background: #e1e1e1;
    border: 1px solid #adadad;
    border-right-width: 2px;
    border-bottom-width: 2px;
    line-height: 16px;
    padding: 0;
}

.muted { color: #8a8a8a; }

.check {
    display: block;
    width: 13px;
    height: 13px;
    margin: 2px 0 0 1px;
    background: #fff;
    border: 1px solid #555;
}

.prop-group {
    height: 20px;
    position: relative;
    padding-left: 2px;
    line-height: 20px;
    background: #d9d9d9;
    color: #222;
}

.collapse {
    position: absolute;
    top: 3px;
    right: 2px;
    font-size: 10px;
    line-height: 9px;
    font-weight: 700;
    transform: rotate(90deg);
}

.props-scroll {
    flex: 1;
    padding-top: 7px;
}

.pthumb {
    width: 15px;
    height: 134px;
    margin-top: 46px;
    background: #cdcdcd;
}

.props-foot {
    height: 25px;
    flex: none;
    padding-left: 2px;
    display: flex;
    align-items: center;
    justify-content: space-between;
}

.help-link {
    margin-top: -4px;
    color: #1a73e0;
}

.apply {
    width: 68px;
    height: 18px;
    margin-right: 9px;
    background: #d9d9d9;
    color: #999;
    text-align: center;
    line-height: 18px;
}

.props-tabs {
    height: 22px;
    flex: none;
    display: flex;
    align-items: center;
    gap: 7px;
    padding-left: 5px;
    background: #c9c9c9;
    white-space: nowrap;
    font-size: 11.6px;
    color: #555;
}

.ptab-on {
    height: 22px;
    padding: 0 6px;
    line-height: 20px;
    background: #f0f0f0;
}

/* barre d'etat */
.status {
    height: 26px;
    flex: none;
    display: flex;
    align-items: center;
    padding: 0 0 2px 4px;
    white-space: nowrap;
    color: #333;
}

.status-text {
    width: 225px;
    overflow: hidden;
}

.status-input {
    height: 18px;
    display: flex;
    align-items: center;
    justify-content: flex-end;
    padding-right: 5px;
    background: #fff;
}

.w-work { width: 203px; margin: 0 6px 0 5px; }
.w-model { width: 205px; margin-left: 6px; justify-content: space-between; padding-left: 3px; }
.model-name { color: #999; }

.zero { margin-left: 3px; }
.s-list { margin: 0 7px 0 14px; }

.status-right {
    display: flex;
    align-items: center;
    gap: 8px;
    margin-left: 286px;
}

.s-funnel { margin-left: -5px; }
.status-right .zero { margin-left: -6px; }

/* par dessus */
.tooltip {
    position: absolute;
    left: 729px;
    top: 465px;
    width: 308px;
    height: 54px;
    padding: 2px 0 2px 3px;
    background: #fff;
    border: 1px solid #888;
    box-shadow: 1px 1px 2px rgba(0, 0, 0, .4);
    color: #555;
    line-height: 16px;
    white-space: nowrap;
}

.badge {
    position: absolute;
    width: 47px;
    height: 48px;
    border-radius: 8px;
    background: linear-gradient(#82a1b9, #5c7a91);
    border: 1px solid #56728a;
    color: #fff;
    font-family: "Open Sans", sans-serif;
    font-weight: 700;
    font-size: 36px;
    line-height: 45px;
    text-align: center;
}

.badge-5 { left: 800px; top: 336px; }
.badge-6 { left: 1142px; top: 629px; }

.mark {
    position: absolute;
    border: 8px solid #607d93;
    border-radius: 5px;
}

.mark-orient { left: 853px; top: 342px; width: 398px; height: 30px; }
.mark-apply { left: 1195px; top: 636px; width: 84px; height: 33px; }
```
